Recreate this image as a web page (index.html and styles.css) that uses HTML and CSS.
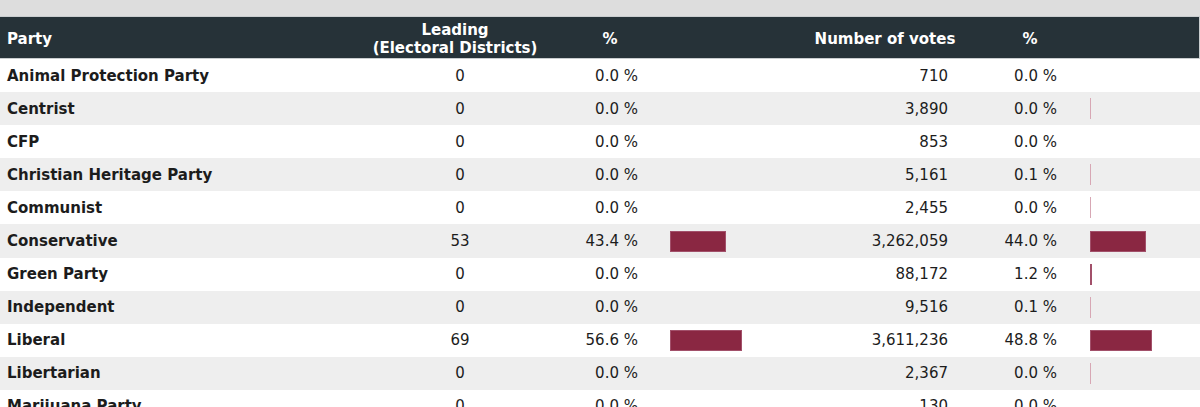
FILE: index.html
```html
<!DOCTYPE html>
<html lang="en">
<head>
<meta charset="utf-8">
<title>Results by party</title>
<link rel="stylesheet" href="styles.css">
</head>
<body>
<div class="topband"></div>
<div class="table">
  <div class="row head">
    <div class="cell party">Party</div>
    <div class="cell center">Leading<br>(Electoral Districts)</div>
    <div class="cell center">%</div>
    <div class="cell"></div>
    <div class="cell center">Number of votes</div>
    <div class="cell center">%</div>
    <div class="cell"></div>
  </div>
  <div class="row">
    <div class="cell party">Animal Protection Party</div>
    <div class="cell lead">0</div>
    <div class="cell pct">0.0 %</div>
    <div class="cell barcell"></div>
    <div class="cell votes">710</div>
    <div class="cell vpct">0.0 %</div>
    <div class="cell barcell"></div>
  </div>
  <div class="row">
    <div class="cell party">Centrist</div>
    <div class="cell lead">0</div>
    <div class="cell pct">0.0 %</div>
    <div class="cell barcell"></div>
    <div class="cell votes">3,890</div>
    <div class="cell vpct">0.0 %</div>
    <div class="cell barcell"><span class="bar trace"></span></div>
  </div>
  <div class="row">
    <div class="cell party">CFP</div>
    <div class="cell lead">0</div>
    <div class="cell pct">0.0 %</div>
    <div class="cell barcell"></div>
    <div class="cell votes">853</div>
    <div class="cell vpct">0.0 %</div>
    <div class="cell barcell"></div>
  </div>
  <div class="row">
    <div class="cell party">Christian Heritage Party</div>
    <div class="cell lead">0</div>
    <div class="cell pct">0.0 %</div>
    <div class="cell barcell"></div>
    <div class="cell votes">5,161</div>
    <div class="cell vpct">0.1 %</div>
    <div class="cell barcell"><span class="bar trace"></span></div>
  </div>
  <div class="row">
    <div class="cell party">Communist</div>
    <div class="cell lead">0</div>
    <div class="cell pct">0.0 %</div>
    <div class="cell barcell"></div>
    <div class="cell votes">2,455</div>
    <div class="cell vpct">0.0 %</div>
    <div class="cell barcell"><span class="bar trace"></span></div>
  </div>
  <div class="row">
    <div class="cell party">Conservative</div>
    <div class="cell lead">53</div>
    <div class="cell pct">43.4 %</div>
    <div class="cell barcell"><span class="bar" style="width:56px"></span></div>
    <div class="cell votes">3,262,059</div>
    <div class="cell vpct">44.0 %</div>
    <div class="cell barcell"><span class="bar" style="width:56px"></span></div>
  </div>
  <div class="row">
    <div class="cell party">Green Party</div>
    <div class="cell lead">0</div>
    <div class="cell pct">0.0 %</div>
    <div class="cell barcell"></div>
    <div class="cell votes">88,172</div>
    <div class="cell vpct">1.2 %</div>
    <div class="cell barcell"><span class="bar" style="width:2px"></span></div>
  </div>
  <div class="row">
    <div class="cell party">Independent</div>
    <div class="cell lead">0</div>
    <div class="cell pct">0.0 %</div>
    <div class="cell barcell"></div>
    <div class="cell votes">9,516</div>
    <div class="cell vpct">0.1 %</div>
    <div class="cell barcell"><span class="bar trace"></span></div>
  </div>
  <div class="row">
    <div class="cell party">Liberal</div>
    <div class="cell lead">69</div>
    <div class="cell pct">56.6 %</div>
    <div class="cell barcell"><span class="bar" style="width:72px"></span></div>
    <div class="cell votes">3,611,236</div>
    <div class="cell vpct">48.8 %</div>
    <div class="cell barcell"><span class="bar" style="width:62px"></span></div>
  </div>
  <div class="row">
    <div class="cell party">Libertarian</div>
    <div class="cell lead">0</div>
    <div class="cell pct">0.0 %</div>
    <div class="cell barcell"></div>
    <div class="cell votes">2,367</div>
    <div class="cell vpct">0.0 %</div>
    <div class="cell barcell"><span class="bar trace"></span></div>
  </div>
  <div class="row">
    <div class="cell party">Marijuana Party</div>
    <div class="cell lead">0</div>
    <div class="cell pct">0.0 %</div>
    <div class="cell barcell"></div>
    <div class="cell votes">130</div>
    <div class="cell vpct">0.0 %</div>
    <div class="cell barcell"></div>
  </div>
</div>
</body>
</html>
```
FILE: styles.css
```css
html, body {
  margin: 0;
  padding: 0;
  overflow: hidden;
  background: #ffffff;
}
body {
  font-family: "DejaVu Sans", Verdana, sans-serif;
  font-size: 15px;
  color: #1c1c1c;
}
.topband {
  height: 16px;
  background: #dddddd;
}
.table {
  display: flex;
  flex-direction: column;
}
.row {
  display: grid;
  grid-template-columns: 360px 190px 120px 130px 170px 120px 1fr;
  height: 33.1px;
  align-items: center;
  flex: none;
}
.row:nth-child(odd) {
  background: #eeeeee;
}
.row.head {
  height: 38px;
  padding-top: 3px;
  background: #263238;
  color: #ffffff;
  font-weight: bold;
  border: 1px solid #c9cdcf;
  border-left: none;
  line-height: 18px;
}
.cell {
  white-space: nowrap;
}
.center {
  text-align: center;
}
.party {
  padding-left: 7px;
  font-weight: bold;
}
.lead {
  text-align: center;
  padding-left: 10px;
}
.pct {
  text-align: right;
  padding-right: 32px;
}
.votes {
  text-align: right;
  padding-right: 22px;
}
.vpct {
  text-align: right;
  padding-right: 33px;
}
.barcell {
  display: flex;
  align-items: center;
  height: 100%;
}
.bar {
  display: block;
  height: 21px;
  background: #8a2742;
  box-sizing: border-box;
  border: 1px solid #a2506a;
}
.bar.trace {
  width: 1px;
  border: none;
  background: #d7a7b4;
}
```
